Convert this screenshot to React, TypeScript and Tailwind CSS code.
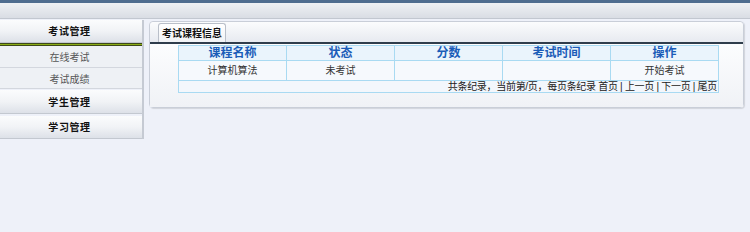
import React from "react";

const font = { fontFamily: '"Liberation Sans", "Noto Sans CJK SC", sans-serif' };

function GroupHeader({ label, h }: { label: string; h: string }) {
  return (
    <div className={`${h} flex items-center justify-center pt-[1px] bg-gradient-to-b from-[#fbfcfd] via-[#f1f3f6] to-[#dde1e8] border-b border-[#c3c8d0] text-[10px] tracking-[0.6px] font-bold text-[#111]`}>
      <span className="mr-[3px]">{label}</span>
    </div>
  );
}

function SubItem({ label, h }: { label: string; h: string }) {
  return (
    <div className={`${h} flex items-center justify-center pt-[2px] bg-[#eef1f5] border-b border-[#d3d7de] text-[10px] text-[#555]`}>
      <span className="mr-[3px]">{label}</span>
    </div>
  );
}

export default function App() {
  const cols = ["课程名称", "状态", "分数", "考试时间", "操作"];
  const row = ["计算机算法", "未考试", "", "", "开始考试"];
  return (
    <div className="w-[750px] h-[232px] bg-[#eef1f9] overflow-hidden" style={font}>
      <div className="h-[3px] bg-[#4f6d8f]" />
      <div className="h-[16px] bg-gradient-to-b from-[#eff1f4] to-[#d9dde4] border-b border-[#c2c7d0]" />
      <div className="flex pt-[1px] items-start">
        <aside className="w-[144px] border-r-[2px] border-[#c5cad3] bg-[#eef1f5]">
          <GroupHeader label="考试管理" h="h-[23px]" />
          <div className="h-[3px] bg-gradient-to-b from-[#1b1f10] via-[#8aac14] to-[#1b1f10]" />
          <SubItem label="在线考试" h="h-[22px]" />
          <SubItem label="考试成绩" h="h-[21px]" />
          <div className="h-[1px] bg-[#eef1f9]" />
          <GroupHeader label="学生管理" h="h-[24px]" />
          <div className="h-[2px] bg-[#eef1f9]" />
          <GroupHeader label="学习管理" h="h-[23px]" />
        </aside>
        <main className="ml-[5px] mt-[1px] w-[595px] rounded-[4px] border border-[#c9ced8] bg-gradient-to-b from-[#f9fafc] to-[#e6e9f0] shadow-[1px_1px_1px_rgba(0,0,0,0.12)]">
          <div className="h-[20px] flex items-end pl-[8px] bg-gradient-to-b from-[#fbfcfd] to-[#e7eaf0] rounded-t-[4px]">
            <div className="h-[19px] w-[68px] flex items-center justify-center rounded-t-[3px] border border-b-0 border-[#b9bfc9] bg-gradient-to-b from-[#ffffff] to-[#f1f3f6] text-[10px] font-bold text-[#111]">
              考试课程信息
            </div>
          </div>
          <div className="h-[2px] bg-[#2f3d4c]" />
          <div className="bg-gradient-to-b from-[#fcfdfe] to-[#f0f2f6] pt-[1px] pb-[14px] pl-[28px]">
            <table className="w-[541px] border-collapse table-fixed">
              <tbody>
                <tr className="h-[15px] bg-[#eaf4fc]">
                  {cols.map((c) => (
                    <td key={c} className="border border-[#a9daf2] text-center text-[12px] leading-[13px] font-bold text-[#1a5cb8] p-0">
                      {c}
                    </td>
                  ))}
                </tr>
                <tr className="h-[20px] bg-[#f6f9fd]">
                  {row.map((c, i) => (
                    <td key={i} className="border border-[#a9daf2] text-center text-[10px] text-[#333] p-0">
                      {c}
                    </td>
                  ))}
                </tr>
                <tr className="h-[12px] bg-[#f3f7fc]">
                  <td colSpan={5} className="border border-[#a9daf2] text-right text-[10px] leading-[11px] tracking-[-0.3px] text-[#222] p-0 pr-[1px]">
                    共条纪录，当前第/页，每页条纪录 首页 | 上一页 | 下一页 | 尾页
                  </td>
                </tr>
              </tbody>
            </table>
          </div>
        </main>
      </div>
    </div>
  );
}
